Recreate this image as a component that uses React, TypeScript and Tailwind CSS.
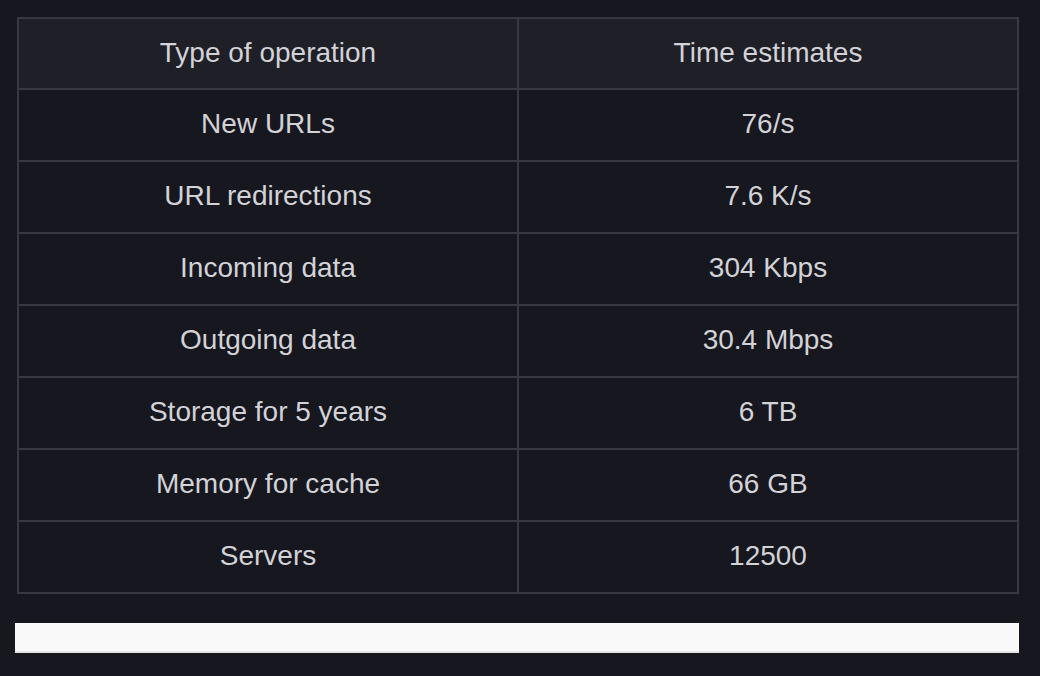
const rows: [string, string][] = [
  ["New URLs", "76/s"],
  ["URL redirections", "7.6 K/s"],
  ["Incoming data", "304 Kbps"],
  ["Outgoing data", "30.4 Mbps"],
  ["Storage for 5 years", "6 TB"],
  ["Memory for cache", "66 GB"],
  ["Servers", "12500"],
];

export default function App() {
  return (
    <div className="h-[676px] w-full bg-[#17171f] overflow-hidden font-['Liberation_Sans',Arial,sans-serif] flex flex-col">
      <table className="ml-[17px] mt-[17px] w-[1002px] border-collapse border-2 border-[#383842] text-[28px] text-[#d2d2d7] table-fixed">
        <thead>
          <tr className="bg-[#1f1f27] h-[71px]">
            <th className="border-2 border-[#383842] font-normal pb-[2px]">Type of operation</th>
            <th className="border-2 border-[#383842] font-normal pb-[2px]">Time estimates</th>
          </tr>
        </thead>
        <tbody>
          {rows.map(([op, est]) => (
            <tr key={op} className="h-[72px]">
              <td className="border-2 border-[#383842] text-center pb-[2px]">{op}</td>
              <td className="border-2 border-[#383842] text-center pb-[2px]">{est}</td>
            </tr>
          ))}
        </tbody>
      </table>

      {/* light input strip below the table */}
      <div className="ml-[15px] mt-[29px] w-[1004px] h-[30px] bg-[#f9f9f9] border-b-2 border-[#e4e4e4]" />
    </div>
  );
}
